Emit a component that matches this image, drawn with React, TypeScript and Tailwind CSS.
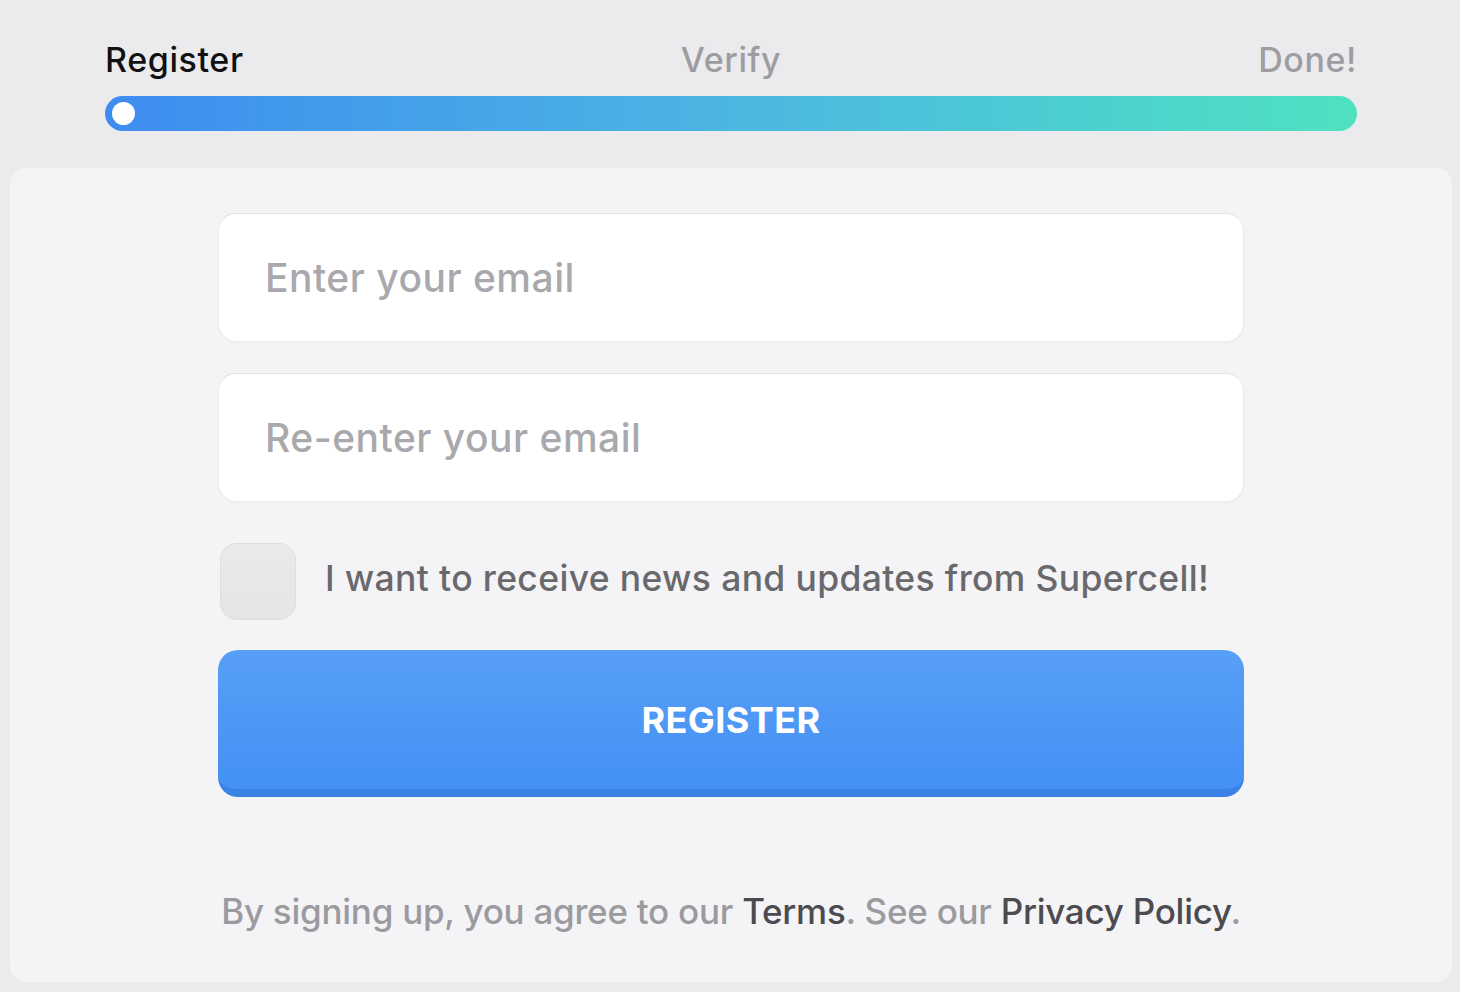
import React from "react";

const font = { fontFamily: "Inter, 'Noto Sans', sans-serif" };

const steps = ["Register", "Verify", "Done!"];

const EmailField = ({ placeholder }: { placeholder: string }) => (
    <div className="flex h-[129px] w-full items-center rounded-[18px] border border-[#ececee] border-t-[#e2e2e4] bg-white pl-[46px] shadow-[0_1px_2px_rgba(0,0,0,0.03)]">
        <span className="text-[39px] font-medium leading-none tracking-[0.5px] text-[#a9a9ad]">{placeholder}</span>
    </div>
);

export default function App() {
    return (
        <div className="flex h-[992px] w-full flex-col bg-[#ebebed]" style={font}>
            {/* progress header */}
            <div className="pl-[105px] pr-[103px] pt-[40px]">
                <div className="grid grid-cols-3 items-center text-[34px] font-medium leading-[40px] tracking-[0.6px]">
                    {steps.map((s, i) => (
                        <span
                            key={s}
                            className={
                                i === 0
                                    ? "text-left text-[#111113]"
                                    : i === 1
                                      ? "text-center text-[#9d9da1]"
                                      : "text-right text-[#9d9da1]"
                            }
                        >
                            {s}
                        </span>
                    ))}
                </div>
                <div className="mt-[16px] flex h-[35px] items-center rounded-full bg-gradient-to-r from-[#3f8cf0] via-[#4cb6e2] to-[#4fe2c0] pl-[7px]">
                    <div className="h-[23px] w-[23px] rounded-full bg-white" />
                </div>
            </div>

            {/* card */}
            <div className="ml-[10px] mr-[8px] mt-[37px] flex h-[814px] flex-col items-center rounded-[16px] bg-[#f4f4f6] pt-[45px]">
                <div className="flex w-[1026px] flex-col">
                    <EmailField placeholder="Enter your email" />
                    <div className="mt-[31px]">
                        <EmailField placeholder="Re-enter your email" />
                    </div>

                    <label className="mt-[41px] flex items-center pl-[2px]">
                        <span className="h-[77px] w-[76px] rounded-[17px] border border-[#dedee0] bg-gradient-to-b from-[#eaeaec] to-[#e5e5e7]" />
                        <span className="ml-[29px] pb-[6px] text-[35.5px] font-medium leading-none tracking-[0.35px] text-[#69696d]">
                            I want to receive news and updates from Supercell!
                        </span>
                    </label>

                    <button className="mt-[30px] flex h-[147px] w-full items-center justify-center rounded-[20px] border-b-[8px] border-[#3b82e6] bg-gradient-to-b from-[#579ff7] to-[#4490f4] text-[36px] font-bold tracking-[0.4px] text-white">
                        REGISTER
                    </button>
                </div>

                <p className="mt-[93px] text-[35px] font-medium leading-[42px] tracking-[-0.25px] text-[#9b9b9f]">
                    By signing up, you agree to our <span className="text-[#4b4b50]">Terms</span>. See our{" "}
                    <span className="text-[#4b4b50]">Privacy Policy</span>.
                </p>
            </div>
        </div>
    );
}
